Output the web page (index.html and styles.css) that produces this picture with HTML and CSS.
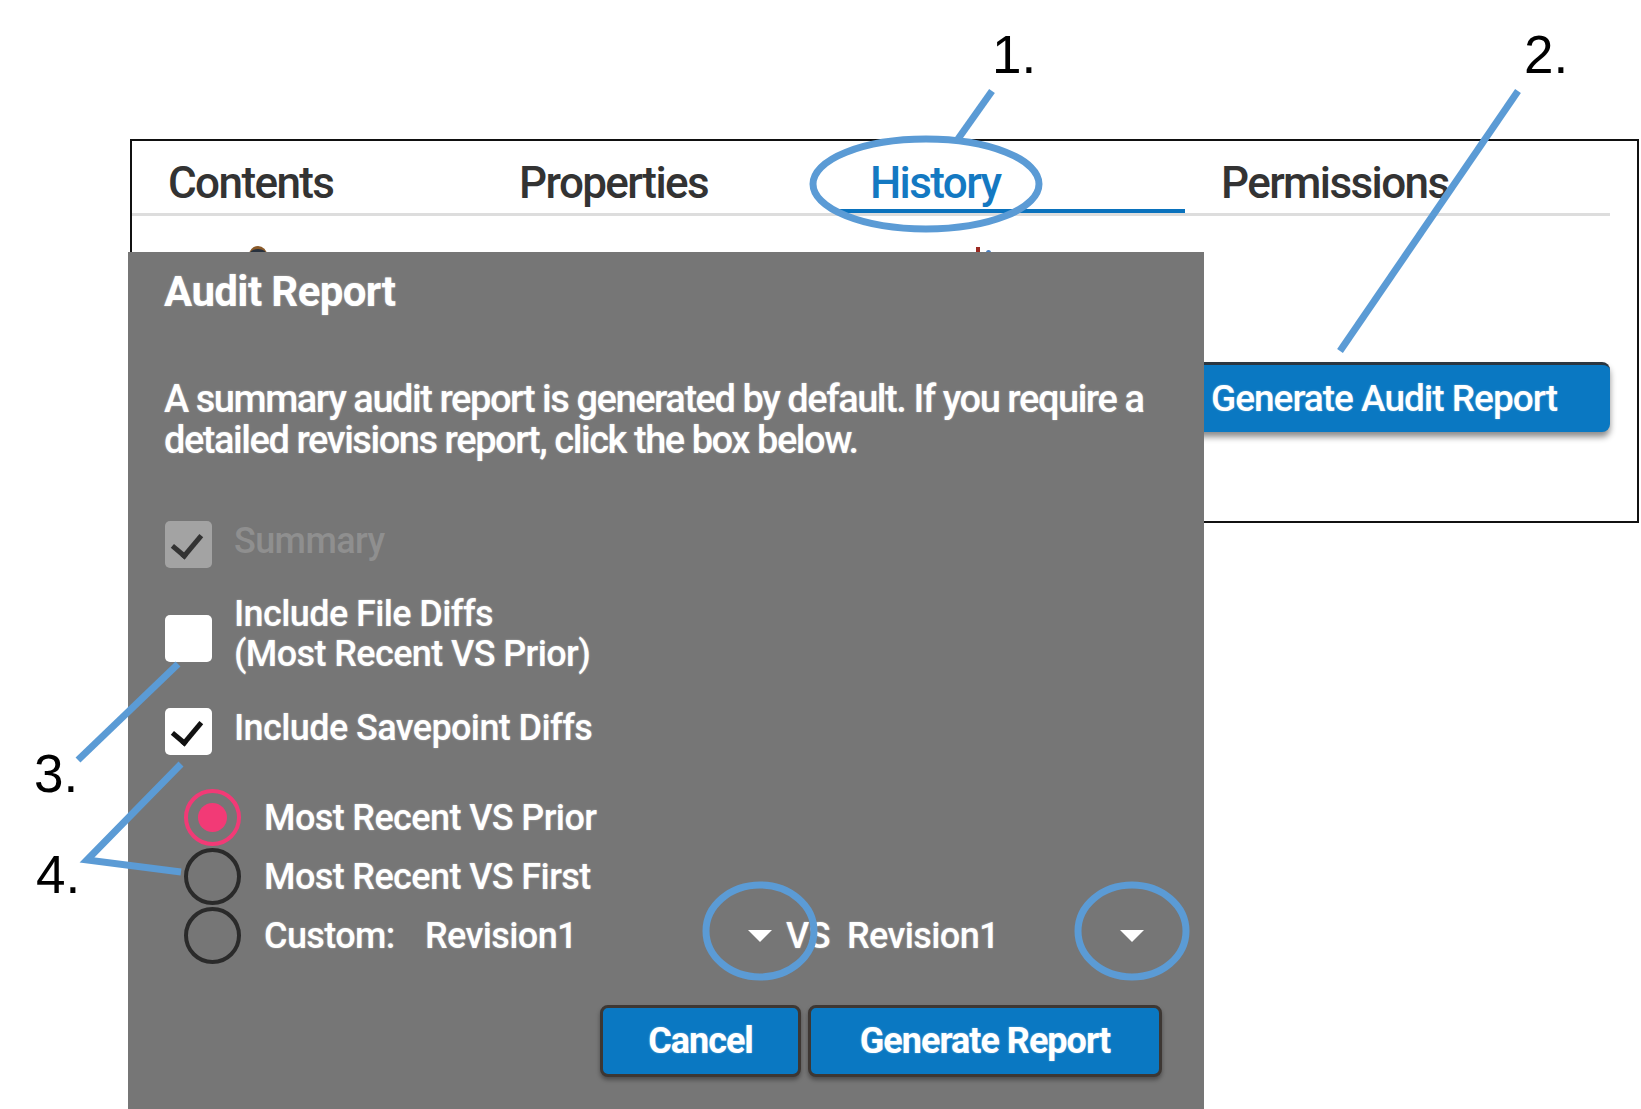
FILE: index.html
```html
<!DOCTYPE html>
<html lang="en">
<head>
    <meta charset="UTF-8">
    <meta name="viewport" content="width=device-width, initial-scale=1.0">
    <title>Audit Report</title>
    <link rel="stylesheet" href="styles.css">
</head>
<body>
    <div class="page">
        <div class="frame">
            <div class="tabs">
                <div class="tab">Contents</div>
                <div class="tab">Properties</div>
                <div class="tab active">History</div>
                <div class="tab">Permissions</div>
            </div>
            <div class="history">
                <div class="peek">
                    <span class="peek-icon"></span>
                    <span class="peek-mark"></span>
                    <span class="peek-dot"></span>
                </div>
                <button class="audit-btn">Generate Audit Report</button>
            </div>
        </div>

        <div class="dialog">
            <h2 class="dialog-title">Audit Report</h2>
            <p class="dialog-text">A summary audit report is generated by default. If you require a detailed revisions report, click the box below.</p>

            <div class="check-row disabled">
                <span class="box checked"></span>
                <span class="check-label">Summary</span>
            </div>
            <div class="check-row">
                <span class="box"></span>
                <span class="check-label">Include File Diffs<br>(Most Recent VS Prior)</span>
            </div>
            <div class="check-row">
                <span class="box checked"></span>
                <span class="check-label">Include Savepoint Diffs</span>
            </div>

            <div class="radios">
                <div class="radio-row">
                    <span class="radio selected"></span>
                    <span class="radio-label">Most Recent VS Prior</span>
                </div>
                <div class="radio-row">
                    <span class="radio"></span>
                    <span class="radio-label">Most Recent VS First</span>
                </div>
                <div class="radio-row">
                    <span class="radio"></span>
                    <span class="radio-label custom">Custom:</span>
                    <span class="select first"><span>Revision1</span><span class="arrow"></span></span>
                    <span class="radio-label vs">VS</span>
                    <span class="select second"><span>Revision1</span><span class="arrow"></span></span>
                </div>
            </div>

            <div class="actions">
                <button class="btn cancel">Cancel</button>
                <button class="btn generate">Generate Report</button>
            </div>
        </div>

        <svg class="notes" width="1641" height="1109" viewBox="0 0 1641 1109">
            <text x="992" y="73">1.</text>
            <text x="1524" y="73">2.</text>
            <text x="34" y="792">3.</text>
            <text x="36" y="893">4.</text>
            <line x1="992" y1="91" x2="958" y2="139"/>
            <line x1="1518" y1="91" x2="1340" y2="351"/>
            <line x1="178" y1="664" x2="78" y2="760"/>
            <polyline points="181,764 87,860 181,872"/>
            <ellipse cx="926" cy="184" rx="113" ry="45"/>
            <ellipse cx="760" cy="931" rx="54" ry="46"/>
            <ellipse cx="1132" cy="931" rx="54" ry="46"/>
        </svg>
    </div>
</body>
</html>
```

FILE: styles.css
```css
* {
    margin: 0;
    padding: 0;
    box-sizing: border-box;
}

body {
    font-family: 'Roboto', 'Liberation Sans', sans-serif;
    background: #ffffff;
    color: #333333;
}

.page {
    position: relative;
    width: 1641px;
    height: 1109px;
    overflow: hidden;
    padding-top: 139px;
}

/* the history panel behind the dialog */
.frame {
    margin-left: 130px;
    width: 1509px;
    height: 384px;
    border: 2px solid #111111;
}

.tabs {
    display: flex;
    margin: 0 27px 0 0;
    padding-top: 18px;
    border-bottom: 3px solid #dddddd;
}

.tab {
    width: 351px;
    padding: 0 0 2px 36px;
    font-size: 44px;
    font-weight: 500;
    line-height: 48px;
    letter-spacing: -1.6px;
    color: #333333;
    border-bottom: 4px solid transparent;
}

.tab.active {
    color: #1479c2;
    border-bottom-color: #0a72bd;
}

.history {
    display: flex;
    flex-direction: column;
    padding: 30px 27px 0 0;
}

.peek {
    display: flex;
    align-items: flex-start;
    height: 116px;
}

.peek-icon {
    width: 18px;
    height: 18px;
    margin-left: 117px;
    border-radius: 50%;
    background: #27313d;
    border-top: 3px solid #8a5a2a;
}

.peek-mark {
    width: 4px;
    height: 10px;
    margin: 1px 0 0 709px;
    background: #9c2a22;
}

.peek-dot {
    width: 5px;
    height: 5px;
    margin: 4px 0 0 6px;
    border-radius: 50%;
    background: #4a7fc0;
}

.audit-btn {
    align-self: flex-end;
    width: 448px;
    height: 70px;
    padding-right: 4px;
    background: #0a78c2;
    color: #ffffff;
    border: none;
    border-top: 3px solid #2b3640;
    border-radius: 8px;
    box-shadow: 0 5px 6px rgba(0, 0, 0, 0.45);
    font-family: 'Roboto', sans-serif;
    font-size: 37px;
    font-weight: 500;
    letter-spacing: -1px;
    text-shadow: 0 0 2px rgba(255, 255, 255, 0.4);
}

/* dialog */
.dialog {
    position: absolute;
    left: 128px;
    top: 252px;
    width: 1076px;
    height: 857px;
    background: #767676;
    padding: 15px 42px 0 36px;
    color: #ffffff;
    text-shadow: 0 0 2px rgba(255, 255, 255, 0.45);
}

.dialog-title {
    font-size: 42px;
    font-weight: 700;
    line-height: 50px;
    letter-spacing: -0.6px;
}

.dialog-text {
    margin-top: 62px;
    font-size: 38px;
    font-weight: 500;
    line-height: 41px;
    letter-spacing: -1.45px;
}

.check-row {
    display: flex;
    align-items: center;
    gap: 22px;
    margin-top: 30px;
    font-size: 36px;
    font-weight: 500;
    line-height: 40px;
    letter-spacing: -0.6px;
}

.check-label {
    position: relative;
    top: -4px;
}

.check-row.disabled {
    margin-top: 60px;
    color: #8f8f8f;
    text-shadow: none;
}

.box {
    position: relative;
    flex: none;
    width: 47px;
    height: 47px;
    margin-left: 1px;
    background: #ffffff;
    border-radius: 5px;
}

.box.checked::after {
    content: "";
    position: absolute;
    left: 13px;
    top: 7px;
    width: 13px;
    height: 24px;
    border-right: 5px solid #111111;
    border-bottom: 5px solid #111111;
    transform: rotate(40deg);
}

.disabled .box {
    background: #a3a3a3;
}

.disabled .box.checked::after {
    border-color: #333333;
}

.radios {
    display: flex;
    flex-direction: column;
    gap: 2px;
    margin-top: 34px;
    padding-left: 20px;
}

.radio-row {
    display: flex;
    align-items: center;
    height: 57px;
    font-size: 36px;
    font-weight: 500;
    line-height: 40px;
    letter-spacing: -0.6px;
}

.radio {
    position: relative;
    flex: none;
    width: 57px;
    height: 57px;
    margin-right: 23px;
    border: 4px solid #2a2a2a;
    border-radius: 50%;
}

.radio.selected {
    border-color: #f23a76;
}

.radio.selected::after {
    content: "";
    position: absolute;
    left: 10px;
    top: 10px;
    width: 29px;
    height: 29px;
    border-radius: 50%;
    background: #f23a76;
}

.radio-label.custom {
    width: 161px;
}

.select {
    display: flex;
    align-items: center;
    justify-content: space-between;
}

.select.first {
    width: 347px;
}

.select.second {
    width: 297px;
}

.radio-label.vs {
    width: 75px;
    padding-left: 14px;
}

.arrow {
    width: 0;
    height: 0;
    border-left: 12px solid transparent;
    border-right: 12px solid transparent;
    border-top: 12px solid #ffffff;
}

.actions {
    display: flex;
    justify-content: flex-end;
    gap: 7px;
    margin-top: 41px;
}

.btn {
    height: 72px;
    background: #0a78c2;
    color: #ffffff;
    border: 3px solid #3d3733;
    border-radius: 8px;
    box-shadow: 0 3px 4px rgba(0, 0, 0, 0.35);
    font-family: 'Roboto', sans-serif;
    font-size: 36px;
    font-weight: 700;
    letter-spacing: -1px;
    text-shadow: 0 0 2px rgba(255, 255, 255, 0.45);
}

.btn.cancel {
    width: 201px;
}

.btn.generate {
    width: 354px;
}

/* callouts drawn over the screenshot */
.notes {
    position: absolute;
    left: 0;
    top: 0;
    pointer-events: none;
}

.notes text {
    font-family: 'Liberation Sans', Arial, sans-serif;
    font-size: 53px;
    fill: #000000;
}

.notes line,
.notes polyline,
.notes ellipse {
    fill: none;
    stroke: #5b9bd5;
    stroke-width: 7;
}
```
